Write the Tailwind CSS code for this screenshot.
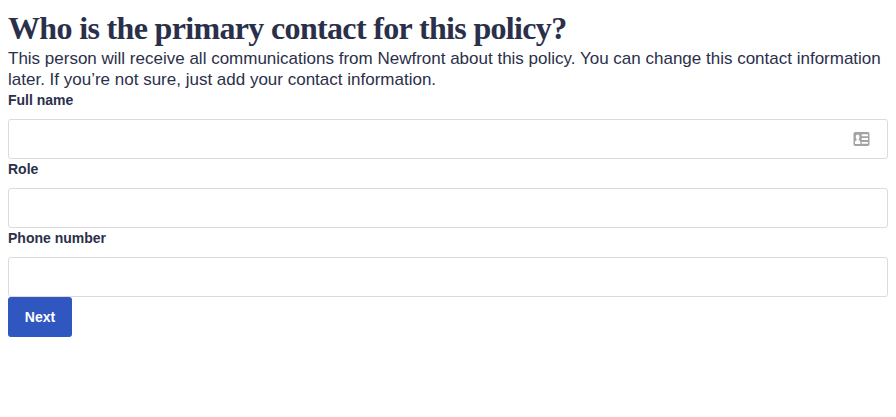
<!DOCTYPE html>
<html lang="en"><head><meta charset="utf-8"><title>Primary contact</title>
<script src="https://cdn.jsdelivr.net/npm/@tailwindcss/browser@4"></script></head>
<body class="bg-white text-[#2b304a] font-['Liberation_Sans',Arial,sans-serif]">
<main class="px-2 pt-2">
<h1 class="h-10 whitespace-nowrap font-['Liberation_Serif',serif] text-[32px] leading-10 font-bold tracking-[-0.66px]">Who is the primary contact for this policy?</h1>
<p class="h-[42px] whitespace-nowrap text-[17px] leading-[21px]">This person will receive all communications from Newfront about this policy. You can change this contact information<br>later. If you’re not sure, just add your contact information.</p>
<form>
<label for="name" class="block h-[29px] text-sm leading-[21px] font-bold">Full name</label>
<div class="flex h-10 items-center justify-end rounded-[3px] border border-[#dbdbdb] pr-[17px]">
<input id="name" class="h-full min-w-0 flex-1 px-4 outline-none">
<svg class="h-[14px] w-[17px]" viewBox="0 0 17 14"><rect x=".5" width="16" height="14" rx="1.8" fill="#a3a3a3"/><path d="M2 12v-1.500c0-1.400.8-1.900 1.700-2.200V7.200C2.300 5.800 2.600 2.500 4.700 2.500S7.100 5.800 5.700 7.200v1.100c.9.300 1.700.8 1.700 2.200V12zM8.700 2.300H15v1.900H8.700zM8.700 6.100H15V8H8.700zM8.700 9.900H15v1.900H8.700z" fill="#fff"/></svg>
</div>
<label for="role" class="block h-[29px] text-sm leading-[21px] font-bold">Role</label>
<input id="role" class="block h-10 w-full rounded-[3px] border border-[#dbdbdb] px-4">
<label for="phone" class="block h-[29px] text-sm leading-[21px] font-bold">Phone number</label>
<input id="phone" class="block h-10 w-full rounded-[3px] border border-[#dbdbdb] px-4">
<button type="button" class="block h-10 w-16 rounded-[3px] bg-[#3056bf] text-sm font-bold text-white">Next</button>
</form></main></body></html>
